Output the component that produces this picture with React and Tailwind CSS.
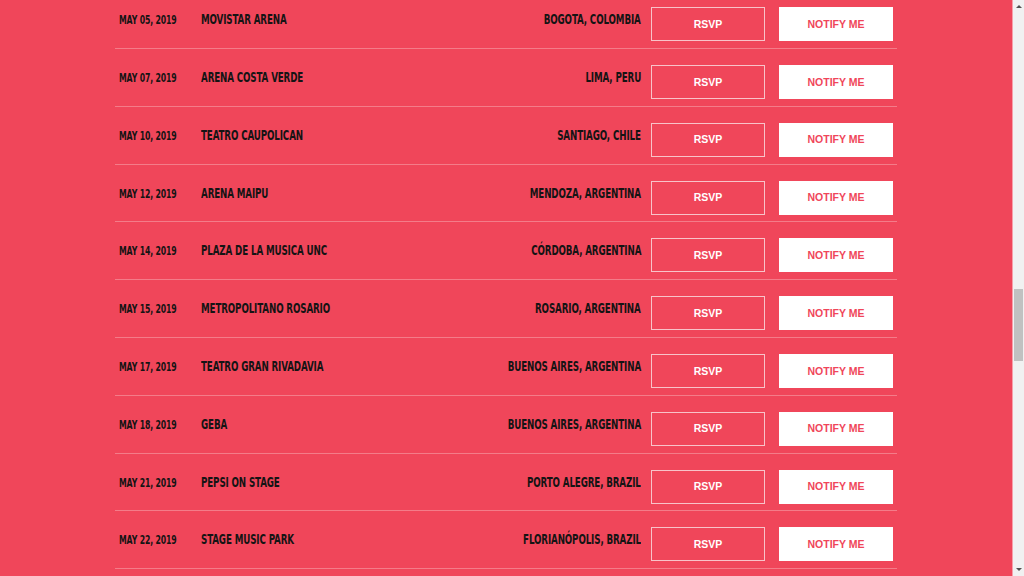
import React from 'react';

const shows = [
  { date: 'MAY 05, 2019', venue: 'MOVISTAR ARENA', city: 'BOGOTA, COLOMBIA' },
  { date: 'MAY 07, 2019', venue: 'ARENA COSTA VERDE', city: 'LIMA, PERU' },
  { date: 'MAY 10, 2019', venue: 'TEATRO CAUPOLICAN', city: 'SANTIAGO, CHILE' },
  { date: 'MAY 12, 2019', venue: 'ARENA MAIPU', city: 'MENDOZA, ARGENTINA' },
  { date: 'MAY 14, 2019', venue: 'PLAZA DE LA MUSICA UNC', city: 'CÓRDOBA, ARGENTINA' },
  { date: 'MAY 15, 2019', venue: 'METROPOLITANO ROSARIO', city: 'ROSARIO, ARGENTINA' },
  { date: 'MAY 17, 2019', venue: 'TEATRO GRAN RIVADAVIA', city: 'BUENOS AIRES, ARGENTINA' },
  { date: 'MAY 18, 2019', venue: 'GEBA', city: 'BUENOS AIRES, ARGENTINA' },
  { date: 'MAY 21, 2019', venue: 'PEPSI ON STAGE', city: 'PORTO ALEGRE, BRAZIL' },
  { date: 'MAY 22, 2019', venue: 'STAGE MUSIC PARK', city: 'FLORIANÓPOLIS, BRAZIL' },
];

const cond = { fontFamily: '"DejaVu Sans Condensed", "DejaVu Sans", sans-serif' };
const btn = { fontFamily: '"Liberation Sans", Arial, sans-serif' };

const ShowRow = ({ show }) => (
  <div className="flex h-[57.8px] items-start border-b border-[#f47c89] pt-[16px] pl-[4px] pr-[4px]">
    <div className="w-[82px] mt-[4px] text-[12.5px] font-bold text-[#141414] whitespace-nowrap" style={cond}>
      <span className="inline-block origin-left scale-x-[0.69] tracking-[-0.2px]">{show.date}</span>
    </div>
    <div className="flex-1 mt-[2px] text-[14.5px] font-bold text-[#141414] whitespace-nowrap" style={cond}>
      <span className="inline-block origin-left scale-x-[0.67] tracking-[-0.2px]">{show.venue}</span>
    </div>
    <div className="mt-[2px] text-[14.5px] font-bold text-[#141414] whitespace-nowrap text-right" style={cond}>
      <span className="inline-block origin-right scale-x-[0.67] tracking-[-0.2px]">{show.city}</span>
    </div>
    <button
      className="ml-[10px] w-[114px] h-[34px] pt-[1px] border border-[#f8c3c9] text-white text-[10.5px] font-bold flex items-center justify-center"
      style={btn}
    >
      RSVP
    </button>
    <button
      className="ml-[14px] w-[114px] h-[34px] pt-[1px] bg-white text-[#f0465a] text-[10.5px] font-bold flex items-center justify-center"
      style={btn}
    >
      NOTIFY ME
    </button>
  </div>
);

const Scrollbar = () => (
  <div className="w-[12px] h-full bg-[#f1f1f1] border-l border-[#f7a0aa] flex flex-col items-center relative">
    <div className="mt-[5px] w-0 h-0 border-l-[3px] border-r-[3px] border-b-[3px] border-l-transparent border-r-transparent border-b-[#505050]" />
    <div className="mt-[281px] w-[9px] h-[72px] bg-[#c1c1c1]" />
    <div className="mt-auto mb-[5px] w-0 h-0 border-l-[3px] border-r-[3px] border-t-[3px] border-l-transparent border-r-transparent border-t-[#505050]" />
  </div>
);

export default function App() {
  return (
    <div className="w-[1024px] h-[576px] overflow-hidden flex bg-[#f0465a]">
      <div className="flex-1 overflow-hidden">
        <div className="w-[782px] ml-[115px] -mt-[8.8px]">
          {shows.map((s) => (
            <ShowRow key={s.date} show={s} />
          ))}
        </div>
      </div>
      <Scrollbar />
    </div>
  );
}
